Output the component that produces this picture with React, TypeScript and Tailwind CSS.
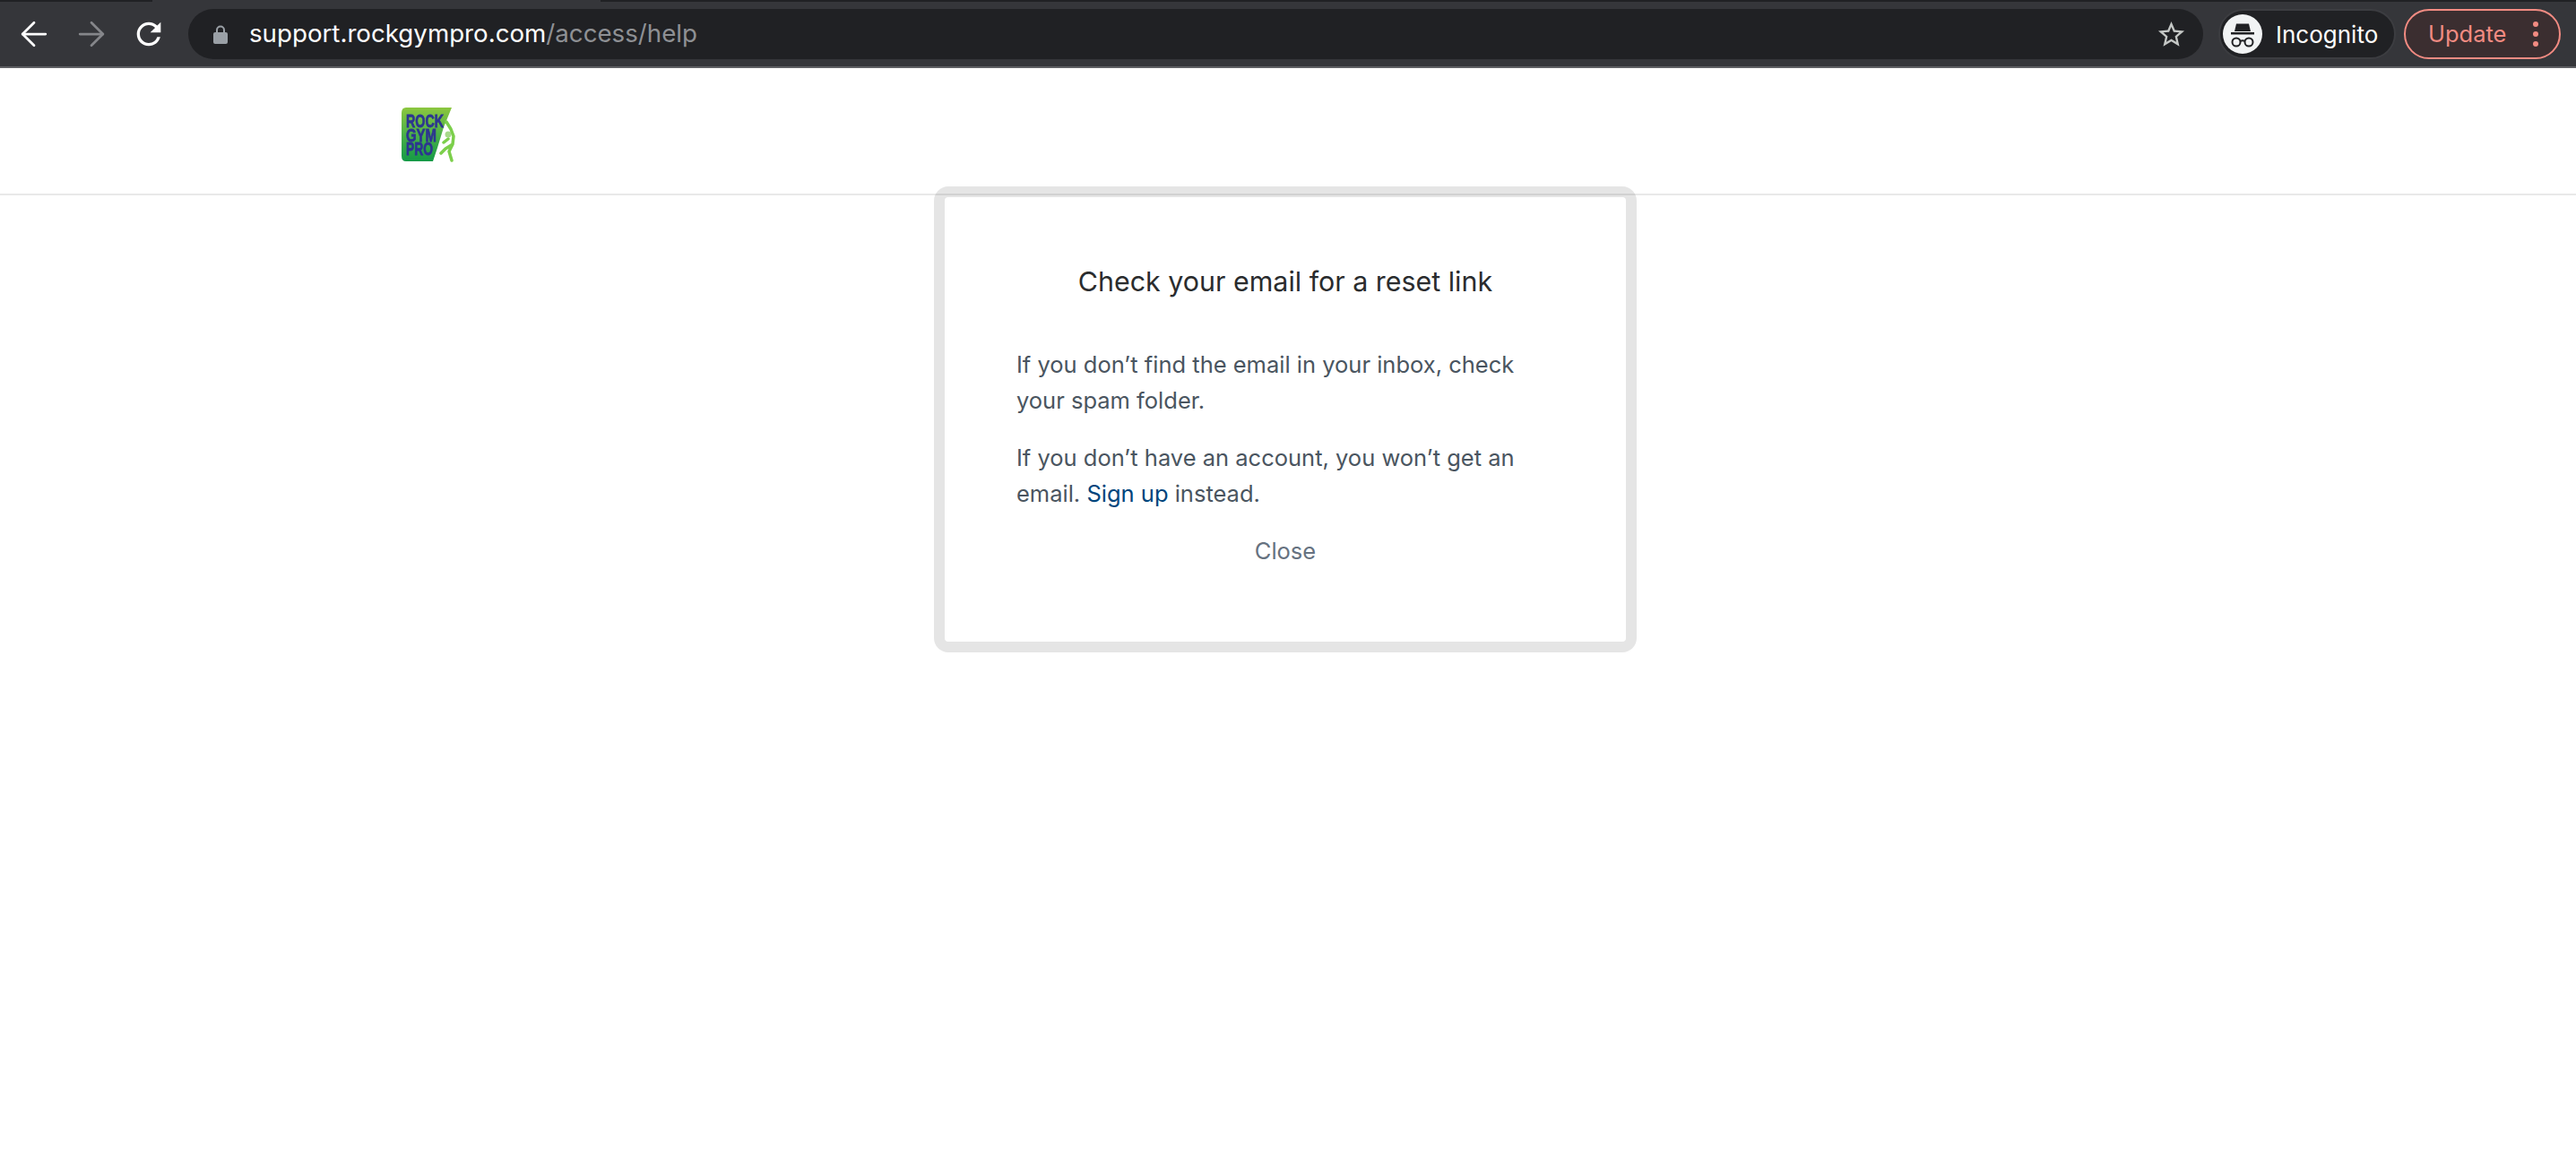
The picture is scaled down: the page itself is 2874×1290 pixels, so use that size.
import { ArrowLeft, ArrowRight } from "lucide-react";

function Logo() {
    return (
        <svg width="64" height="62" viewBox="0 0 64 62" className="blur-[0.7px]">
            <defs>
                <linearGradient id="rgp" x1="0" y1="0" x2="0" y2="1">
                    <stop offset="0" stopColor="#8cc63f" />
                    <stop offset="0.5" stopColor="#4bb048" />
                    <stop offset="1" stopColor="#149a47" />
                </linearGradient>
            </defs>
            <path d="M6 1H57L48 23L41 46L36 61H6Q1 61 1 55V7Q1 1 6 1Z" fill="url(#rgp)" />
            <g fill="#2d3590" stroke="#2d3590" strokeWidth="0.8" fontFamily="'Liberation Sans', sans-serif" fontWeight="700" fontSize="20">
                <text x="6" y="23" textLength="42" lengthAdjust="spacingAndGlyphs">ROCK</text>
                <text x="6" y="39" textLength="34" lengthAdjust="spacingAndGlyphs">GYM</text>
                <text x="6" y="54" textLength="30" lengthAdjust="spacingAndGlyphs">PRO</text>
            </g>
            <circle cx="53" cy="31" r="3.5" fill="#a6d98a" />
            <path d="M51 17L56 25L59 33L58 42L50 47L45 52M58 42L54 50L57 60M53 36L48 40" fill="none" stroke="#7ccf4b" strokeWidth="3.5" strokeLinecap="round" strokeLinejoin="round" />
        </svg>
    );
}

function IncognitoIcon() {
    return (
        <svg width="44" height="44" viewBox="0 0 44 44">
            <circle cx="22" cy="22" r="22" fill="#f1f3f4" />
            <path d="M15 10.5H29L31 19H13Z" fill="#202124" />
            <rect x="9" y="20" width="26" height="2.5" fill="#202124" />
            <circle cx="15" cy="31" r="4.5" fill="none" stroke="#202124" strokeWidth="2" />
            <circle cx="29" cy="31" r="4.5" fill="none" stroke="#202124" strokeWidth="2" />
            <path d="M19.5 30Q22 28.5 24.5 30" fill="none" stroke="#202124" strokeWidth="2" />
        </svg>
    );
}

function ReloadIcon() {
    return (
        <svg width="40" height="40" viewBox="0 0 24 24" fill="#ffffff" className="shrink-0 ml-[22px]">
            <path d="M17.65 6.35A7.958 7.958 0 0 0 12 4c-4.42 0-7.99 3.58-7.99 8s3.57 8 7.99 8c3.73 0 6.84-2.55 7.73-6h-2.08A5.99 5.99 0 0 1 12 18c-3.31 0-6-2.69-6-6s2.69-6 6-6c1.66 0 3.14.69 4.22 1.78L13 11h7V4l-2.35 2.35z" />
        </svg>
    );
}

function LockIcon() {
    return (
        <svg width="16" height="21" viewBox="0 0 16 21" className="shrink-0">
            <path d="M4 9V5.5a4 4 0 0 1 8 0V9" fill="none" stroke="#9aa0a6" strokeWidth="2" />
            <rect x="0" y="8" width="16" height="13" rx="2" fill="#9aa0a6" />
        </svg>
    );
}

function StarIcon() {
    return (
        <svg width="35" height="35" viewBox="0 0 24 24" fill="#c4c7c5" className="shrink-0 ml-auto">
            <path d="M22 9.24l-7.19-.62L12 2 9.19 8.63 2 9.24l5.46 4.73L5.82 21 12 17.27 18.18 21l-1.63-7.03L22 9.24zM12 15.4l-3.76 2.27 1-4.28-3.32-2.88 4.38-.38L12 6.1l1.71 4.04 4.38.38-3.32 2.88 1 4.28L12 15.4z" />
        </svg>
    );
}

export default function App() {
    return (
        <div className="min-h-[1290px] bg-white font-['Inter',sans-serif]">
            {/* browser toolbar */}
            <div className="h-[76px] border-b-2 border-[#5f6064] bg-[#35363a]">
                <div className="h-[2px] flex">
                    <div className="w-[170px] bg-[#202124]" />
                    <div className="w-[500px]" />
                    <div className="flex-1 bg-[#202124]" />
                </div>
                <div className="h-[72px] flex items-center pl-[16px]">
                    <ArrowLeft size={44} strokeWidth={1.5} className="text-white shrink-0" />
                    <ArrowRight size={44} strokeWidth={1.5} className="text-[#85868a] shrink-0 ml-[20px]" />
                    <ReloadIcon />
                    <div className="ml-[24px] w-[2248px] h-[56px] rounded-full bg-[#202124] flex items-center pl-[28px] pr-[18px] shrink-0">
                        <LockIcon />
                        <span className="ml-[24px] text-[27.7px] text-white">
                            support.rockgympro.com<span className="text-[#8e9094]">/access/help</span>
                        </span>
                        <StarIcon />
                    </div>
                    <div className="ml-[17px] h-[56px] w-[198px] rounded-full bg-[#202124] border-2 border-[#3c3d41] flex items-center pl-[3px] shrink-0">
                        <IncognitoIcon />
                        <span className="ml-[15px] text-[26px] text-white">Incognito</span>
                    </div>
                    <div className="ml-[9px] h-[56px] w-[175px] rounded-full bg-[#3b2e30] border-2 border-[#f28b82] flex items-center pl-[25px] shrink-0">
                        <span className="text-[25.5px] text-[#f28b82]">Update</span>
                        <div className="ml-[30px] flex flex-col gap-[5px]">
                            <div className="w-[6px] h-[6px] rounded-full bg-[#f28b82]" />
                            <div className="w-[6px] h-[6px] rounded-full bg-[#f28b82]" />
                            <div className="w-[6px] h-[6px] rounded-full bg-[#f28b82]" />
                        </div>
                    </div>
                </div>
            </div>

            {/* site header */}
            <div className="h-[142px] border-b-2 border-[#e9e9e9] pl-[447px] pt-[43px]">
                <Logo />
            </div>

            {/* reset link dialog */}
            <div className="flex justify-center -mt-[10px]">
                <div className="mr-[6px] w-[784px] h-[520px] border-[12px] border-black/10 bg-white bg-clip-padding rounded-[16px] px-[80px] pt-[72px]">
                    <h2 className="text-[30.4px] leading-[44px] text-center text-[#2a2c2e]">Check your email for a reset link</h2>
                    <p className="mt-[51px] text-[25.5px] leading-[40px] text-[#4a5560]">
                        If you don’t find the email in your inbox, check your spam folder.
                    </p>
                    <p className="mt-[24px] text-[25.5px] leading-[40px] text-[#4a5560]">
                        If you don’t have an account, you won’t get an email. <span className="text-[#00457c]">Sign up</span> instead.
                    </p>
                    <div className="mt-[24px] text-[25.5px] leading-[40px] text-center text-[#667280]">Close</div>
                </div>
            </div>
        </div>
    );
}
